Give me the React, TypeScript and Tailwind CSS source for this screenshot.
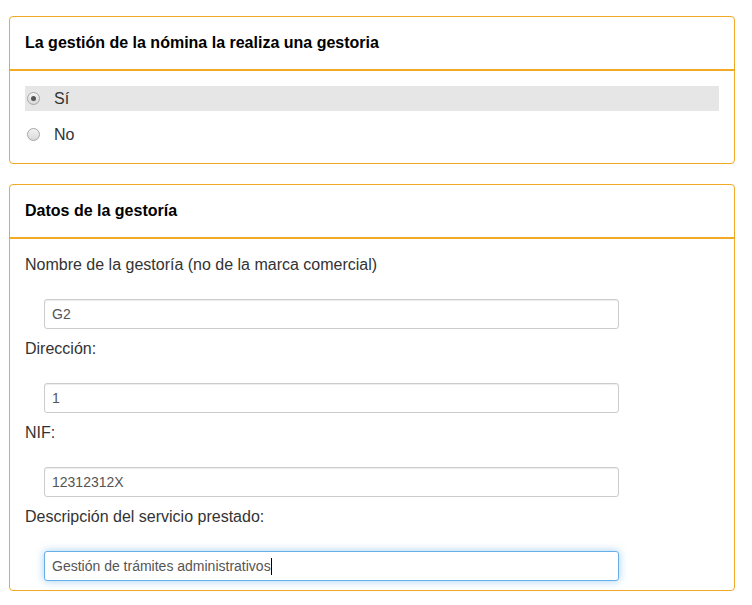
import React from "react";

const font = { fontFamily: '"Liberation Sans", Arial, sans-serif' };

function Radio({ checked }: { checked?: boolean }) {
  return (
    <span className="flex h-[13px] w-[13px] items-center justify-center rounded-full border border-[#a6a6a6] bg-gradient-to-b from-[#f4f4f4] to-[#d8d8d8]">
      {checked && <span className="h-[5px] w-[5px] rounded-full bg-[#555]" />}
    </span>
  );
}

function Field({ label, value, focused }: { label: string; value: string; focused?: boolean }) {
  return (
    <div className="flex flex-col">
      <div className="h-[22px] text-[16px] leading-[22px] text-[#333]">{label}</div>
      <div
        className={
          focused
            ? "ml-[19px] mt-[23px] flex h-[30px] w-[575px] items-center rounded-[3px] border border-[#66afe9] bg-white pl-[7px] text-[14px] text-[#555] shadow-[0_0_8px_rgba(102,175,233,0.6)]"
            : "ml-[19px] mt-[23px] flex h-[30px] w-[575px] items-center rounded-[3px] border border-[#ccc] bg-white pl-[7px] text-[14px] text-[#555] shadow-[inset_0_1px_1px_rgba(0,0,0,0.075)]"
        }
      >
        <span>{value}</span>
        {focused && <span className="h-[17px] w-px bg-black" />}
      </div>
    </div>
  );
}

function Card({ title, children }: { title: string; children: React.ReactNode }) {
  return (
    <div className="w-[726px] rounded-[4px] border border-[#f2a926] bg-white">
      <div className="flex h-[54px] items-center border-b-2 border-[#f2a926] px-[15px] text-[16px] font-bold text-black">
        {title}
      </div>
      {children}
    </div>
  );
}

export default function App() {
  return (
    <div className="min-h-screen bg-white pl-[9px] pt-[16px]" style={font}>
      <div className="flex flex-col gap-[20px]">
        <Card title="La gestión de la nómina la realiza una gestoria">
          <div className="flex flex-col gap-[11px] px-[15px] pb-[16px] pt-[15px]">
            <div className="flex h-[25px] items-center bg-[#e6e6e6] pl-[2px] text-[16px] text-[#333]">
              <Radio checked />
              <span className="ml-[14px]">Sí</span>
            </div>
            <div className="flex h-[25px] items-center pl-[2px] text-[16px] text-[#333]">
              <Radio />
              <span className="ml-[14px]">No</span>
            </div>
          </div>
        </Card>
        <Card title="Datos de la gestoría">
          <div className="flex flex-col gap-[9px] px-[15px] pb-[9px] pt-[15px]">
            <Field label="Nombre de la gestoría (no de la marca comercial)" value="G2" />
            <Field label="Dirección:" value="1" />
            <Field label="NIF:" value="12312312X" />
            <Field label="Descripción del servicio prestado:" value="Gestión de trámites administrativos" focused />
          </div>
        </Card>
      </div>
    </div>
  );
}
